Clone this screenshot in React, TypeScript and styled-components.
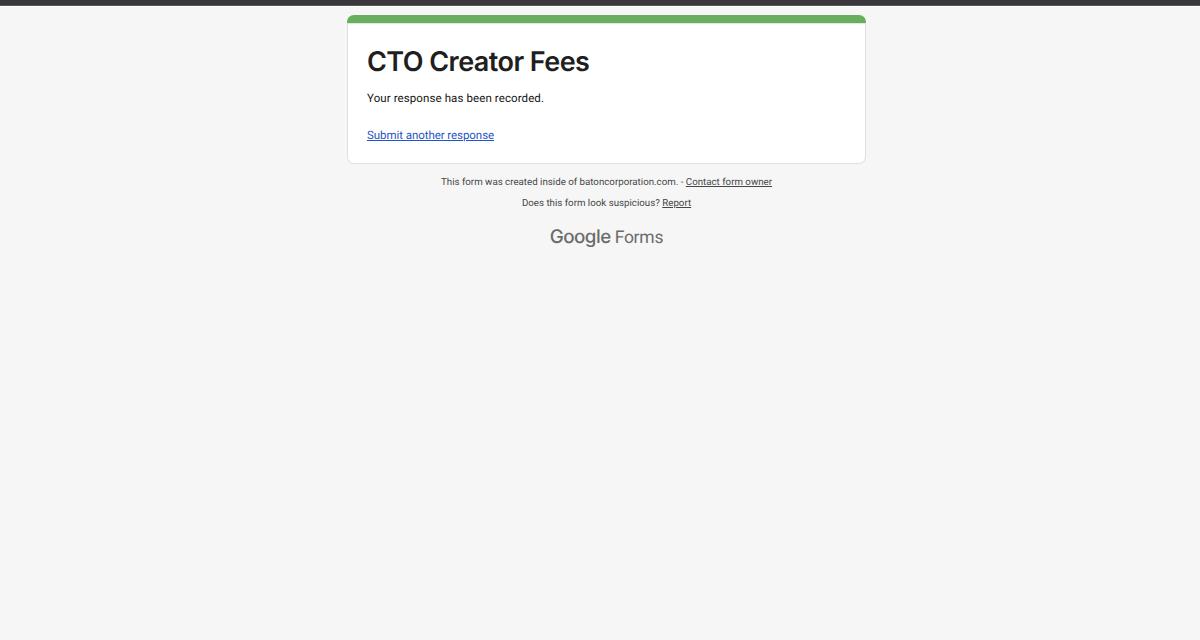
import React from "react";
import styled, { createGlobalStyle } from "styled-components";

const GlobalStyle = createGlobalStyle`
  body {
    margin: 0;
    background: #f6f6f6;
    font-family: Roboto, sans-serif;
    text-rendering: geometricPrecision;
    -webkit-font-smoothing: antialiased;
  }
`;

const Page = styled.div`
  min-height: 640px;
  box-sizing: border-box;
  border-top: 5px solid #3a373f;
  box-shadow: inset 0 1px #5b575f, inset 0 2px #fff;
  padding: 10px 0 0 13px;
  display: flex;
  flex-direction: column;
  align-items: center;
`;

const Card = styled.main`
  box-sizing: border-box;
  width: 519px;
  height: 149px;
  margin-right: 1px;
  background: #fff;
  border: 1px solid #dfe0e2;
  border-top: 0;
  border-radius: 7px;
`;

const Accent = styled.div`
  height: 8px;
  margin: 0 -1px;
  border-radius: 7px 7px 0 0;
  background: #69ad5f;
  box-shadow: 0 1px #d7efd2;
`;

const CardBody = styled.div`
  padding: 22px 19px 0 19.5px;
`;

const Title = styled.h1`
  margin: 0;
  font: 600 27px/34px Inter, sans-serif;
  letter-spacing: -0.55px;
  color: #1f1f1f;
  white-space: nowrap;
`;

const Message = styled.p`
  margin: 11px 0 0;
  font-size: 11.5px;
  line-height: 16px;
  letter-spacing: 0.1px;
  color: #151515;
`;

const Link = styled.a`
  display: inline-block;
  margin-top: 21px;
  font-size: 11.5px;
  line-height: 16px;
  letter-spacing: -0.06px;
  color: #1f55c6;
  text-decoration: underline;
`;

const Note = styled.p<{ $gap: number }>`
  margin: ${(p) => p.$gap}px 0 0;
  font-size: 9.72px;
  line-height: 14px;
  color: #444746;
`;

const NoteLink = styled.a`
  text-decoration: underline;
`;

const Brand = styled.div`
  margin-top: 14px;
  display: flex;
  align-items: baseline;
  gap: 4px;
  line-height: 24px;
  color: #6b6b6b;
`;

const Google = styled.span`
  font: 450 18.8px/24px Inter, sans-serif;
  letter-spacing: -0.55px;
`;

const Forms = styled.span`
  font: 400 17.5px/24px Roboto, sans-serif;
  letter-spacing: -0.25px;
`;

export default function App() {
  return (
    <>
      <GlobalStyle />
      <Page>
        <Card>
          <Accent />
          <CardBody>
            <Title>CTO Creator Fees</Title>
            <Message>Your response has been recorded.</Message>
            <Link>Submit another response</Link>
          </CardBody>
        </Card>
        <Note $gap={12}>
          This form was created inside of batoncorporation.com. - <NoteLink>Contact form owner</NoteLink>
        </Note>
        <Note $gap={7}>
          Does this form look suspicious? <NoteLink>Report</NoteLink>
        </Note>
        <Brand>
          <Google>Google</Google>
          <Forms>Forms</Forms>
        </Brand>
      </Page>
    </>
  );
}
